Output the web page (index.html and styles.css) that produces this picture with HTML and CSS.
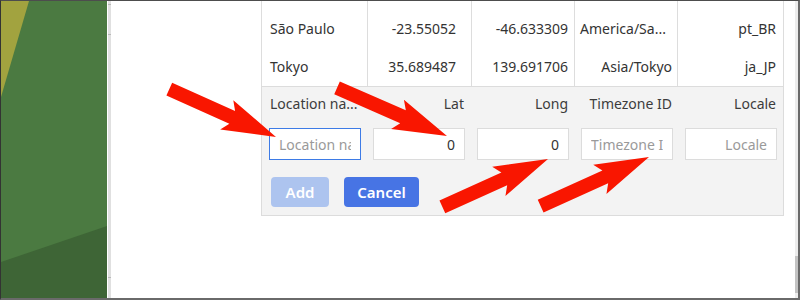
FILE: index.html
```html
<!DOCTYPE html>
<html lang="en">
<head>
    <meta charset="UTF-8">
    <title>Locations</title>
    <link rel="stylesheet" href="styles.css">
</head>
<body>
    <div class="screen">
        <div class="desktop">
            <svg width="106" height="297" viewBox="0 0 106 297">
                <rect width="106" height="297" fill="#4b7a41"/>
                <polygon points="0,0 28,0 0,96" fill="#a2a33f"/>
                <polygon points="0,261 106,225 106,297 0,297" fill="#3e6536"/>
            </svg>
        </div>
        <div class="splitter"></div>
        <div class="pane">
            <div class="grid">
                <div class="cell"></div><div class="cell"></div><div class="cell"></div><div class="cell"></div><div class="cell"></div>
                <div class="cell name">São Paulo</div>
                <div class="cell lat">-23.55052</div>
                <div class="cell long">-46.633309</div>
                <div class="cell tz tz-cut">America/Sa...</div>
                <div class="cell locale">pt_BR</div>
                <div class="cell name">Tokyo</div>
                <div class="cell lat">35.689487</div>
                <div class="cell long">139.691706</div>
                <div class="cell tz">Asia/Tokyo</div>
                <div class="cell locale">ja_JP</div>
            </div>
            <form class="editor">
                <div class="fields">
                    <span class="lbl lbl-left">Location na...</span>
                    <span class="lbl">Lat</span>
                    <span class="lbl">Long</span>
                    <span class="lbl">Timezone ID</span>
                    <span class="lbl">Locale</span>
                    <input class="field focused" type="text" placeholder="Location name">
                    <input class="field num" type="text" value="0">
                    <input class="field num" type="text" value="0">
                    <input class="field" type="text" placeholder="Timezone ID">
                    <input class="field num" type="text" placeholder="Locale">
                </div>
                <div class="actions">
                    <button type="button" class="btn add" disabled>Add</button>
                    <button type="button" class="btn cancel">Cancel</button>
                </div>
            </form>
        </div>
        <div class="vscroll"><div class="thumb"></div></div>
        <svg class="arrows" width="800" height="300" viewBox="0 0 800 300">
            <g fill="#f91600">
                <polygon transform="translate(276,137) rotate(24.2)" points="0,0 -54,-16 -48,-7 -117,-7 -117,7 -48,7 -54,16"/>
                <polygon transform="translate(447,136) rotate(23.6)" points="0,0 -54,-16 -48,-7 -120,-7 -120,7 -48,7 -54,16"/>
                <polygon transform="translate(548,159) rotate(-24.4)" points="0,0 -54,-16 -48,-7 -116,-7 -116,7 -48,7 -54,16"/>
                <polygon transform="translate(649,157) rotate(-24.4)" points="0,0 -54,-16 -48,-7 -119,-7 -119,7 -48,7 -54,16"/>
            </g>
        </svg>
    </div>
</body>
</html>
```
FILE: styles.css
```css
body{
    margin:0;
    font-family:"Noto Sans", "Open Sans", sans-serif;
    font-size:14px;
    color:#333;
}
.screen{
    position:relative;
    display:flex;
    width:800px;
    height:300px;
    box-sizing:border-box;
    border-top:1px solid #4d4d4d;
    border-left:1px solid #333;
    border-right:2px solid #6a6a6a;
    border-bottom:2px solid #6a6a6a;
    overflow:hidden;
}
.desktop{
    width:106px;
    flex:none;
}
.desktop svg{
    display:block;
}
.splitter{
    width:4px;
    flex:none;
    background:
        linear-gradient(#b9b9b9,#b9b9b9) no-repeat 1px 3px / 3px 1px,
        linear-gradient(#b9b9b9,#b9b9b9) no-repeat 1px 33px / 3px 1px,
        linear-gradient(#b9b9b9,#b9b9b9) no-repeat 1px 276px / 3px 1px,
        linear-gradient(to right, #fff 0 1px, #e0e0e0 1px);
}
.pane{
    flex:1;
    background:#fff;
    padding-left:150px;
}
.grid{
    display:grid;
    grid-template-columns:106px 104px 103px 103px 106px;
    grid-template-rows:9px 38px 38px;
    width:523px;
    box-sizing:border-box;
    border-left:1px solid #ddd;
}
.cell{
    border-right:1px solid #ddd;
    line-height:38px;
    white-space:nowrap;
    overflow:hidden;
    text-align:right;
}
.name{
    text-align:left;
    padding-left:8px;
}
.lat{
    padding-right:15px;
}
.long{
    padding-right:6px;
}
.tz{
    padding-right:5px;
}
.tz-cut{
    text-align:left;
    padding-left:5px;
}
.locale{
    padding-right:7px;
}
.editor{
    width:523px;
    box-sizing:border-box;
    background:#f3f3f3;
    border:1px solid #dcdcdc;
    padding:7px 0 8px 7px;
    margin:0;
}
.fields{
    display:grid;
    grid-template-columns:repeat(5, 92px);
    column-gap:12px;
    row-gap:14px;
}
.lbl{
    line-height:20px;
    text-align:right;
    padding-right:1px;
    color:#3c3c3c;
    white-space:nowrap;
}
.lbl-left{
    text-align:left;
    padding-left:1px;
    padding-right:0;
}
.field{
    width:92px;
    height:32px;
    box-sizing:border-box;
    border:1px solid #dcdcdc;
    background:#fff;
    padding:0 9px;
    font-family:inherit;
    font-size:14px;
    color:#333;
    outline:none;
}
.field::placeholder{
    color:#9a9a9a;
}
.num{
    text-align:right;
}
.focused{
    border-color:#3d7be6;
}
.actions{
    display:flex;
    gap:15px;
    margin-top:17px;
    padding-left:2px;
}
.btn{
    height:30px;
    border:0;
    border-radius:4px;
    color:#fff;
    font-family:inherit;
    font-size:15px;
    font-weight:600;
    padding:0;
}
.add{
    width:58px;
    background:#adc4ef;
}
.cancel{
    width:75px;
    background:#4774e4;
}
.vscroll{
    width:3px;
    flex:none;
    background:#ececec;
}
.thumb{
    margin-top:255px;
    height:37px;
    background:#c3c3c3;
}
.arrows{
    position:absolute;
    left:-1px;
    top:-1px;
    pointer-events:none;
}
```
